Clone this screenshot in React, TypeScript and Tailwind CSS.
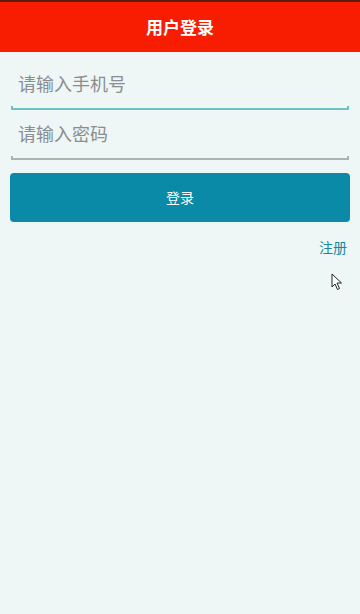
const FONT = '"Noto Sans CJK SC", "Noto Sans", sans-serif';

function Field({ placeholder, active }: { placeholder: string; active?: boolean }) {
  const line = active ? 'border-[#6fc2c8]' : 'border-[#aab4b6]';
  return (
    <div className="relative h-[50px] mx-[11px]">
      <input
        className="w-full h-[46px] bg-transparent outline-none px-[7px] pb-[2px] text-[18px] text-[#333] placeholder:text-[#8a8e90]"
        placeholder={placeholder}
        style={{ fontFamily: FONT }}
      />
      <div className={`absolute left-0 right-0 bottom-[1px] h-[4px] border-x-2 border-b-2 ${line}`} />
    </div>
  );
}

function Cursor() {
  return (
    <svg className="absolute left-[331px] top-[273px]" width="12" height="18" viewBox="0 0 12 18">
      <path d="M1 1 L1 14 L4 11 L6.5 16.5 L8.5 15.5 L6 10 L10.5 10 Z" fill="#fff" stroke="#222" strokeWidth="1" strokeLinejoin="round" />
    </svg>
  );
}

export default function App() {
  return (
    <div className="relative w-[360px] h-[614px] bg-[#eef6f6] overflow-hidden" style={{ fontFamily: FONT }}>
      <div className="h-[2px] bg-[#5b1c12]" />
      <header className="h-[50px] bg-[#f81c00] flex items-center justify-center">
        <h1 className="text-[17px] font-bold text-white">用户登录</h1>
      </header>
      <div className="pt-[9px]">
        <Field placeholder="请输入手机号" active />
        <Field placeholder="请输入密码" />
      </div>
      <div className="px-[10px] pt-[12px]">
        <button className="w-full h-[49px] rounded-[4px] bg-[#0a8aa6] text-white text-[14px]">登录</button>
      </div>
      <div className="flex justify-end pr-[13px] pt-[15px]">
        <a className="text-[14px] text-[#15899f]">注册</a>
      </div>
      <Cursor />
    </div>
  );
}
